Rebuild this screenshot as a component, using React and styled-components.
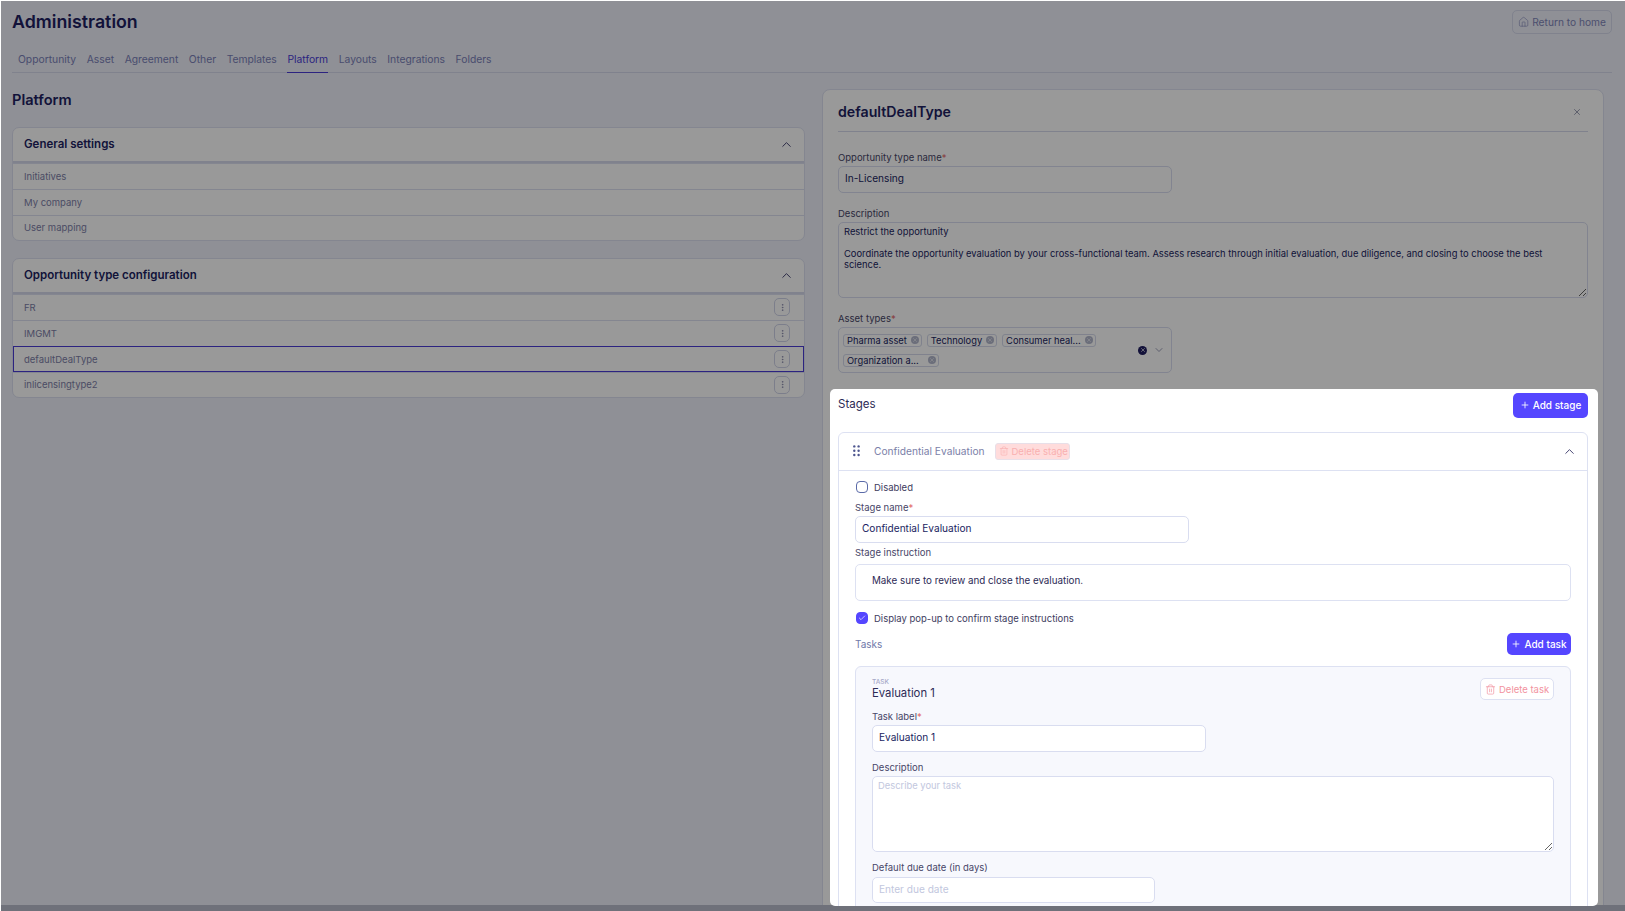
import React from 'react';
import styled, { createGlobalStyle } from 'styled-components';
import { House, Plus, X, ChevronUp, ChevronDown, Trash2, Check, EllipsisVertical } from 'lucide-react';

const GlobalStyle = createGlobalStyle`
  * { box-sizing: border-box; }
  html, body { margin: 0; height: 100%; overflow: hidden; }
  body {
    background: #eef0fa;
    font-family: Inter, "Noto Sans", sans-serif;
    color: #211e61;
  }
  input, textarea { font-family: inherit; }
`;

const Page = styled.div`
  position: relative;
  height: 911px;
  padding: 9px 13px 0 11px;
  border-top: 1px solid #fff;
  border-left: 1px solid #fff;
  overflow: hidden;
`;

const TopBar = styled.header`
  display: flex;
  justify-content: space-between;
  align-items: flex-start;
  height: 34px;
`;

const Title = styled.h1`
  margin: 0;
  font-size: 17.8px;
  line-height: 23px;
  font-weight: 600;
  color: #211e61;
`;

const HomeButton = styled.button`
  display: flex;
  align-items: center;
  gap: 3px;
  width: 100px;
  height: 24px;
  padding: 0 5px 1px;
  border: 1px solid #d5d9ec;
  border-radius: 5px;
  background: transparent;
  font: inherit;
  font-size: 10.2px;
  color: #7f85b8;
  white-space: nowrap;
`;

const Tabs = styled.nav`
  display: flex;
  gap: 10.6px;
  height: 29px;
  padding-left: 6px;
  border-bottom: 1px solid #d5d9ec;
`;

const Tab = styled.a`
  height: 29px;
  padding-top: 8px;
  font-size: 10.3px;
  line-height: 14px;
  color: ${({ $active }) => ($active ? '#4a3bd6' : '#7a80b8')};
  border-bottom: 1px solid ${({ $active }) => ($active ? '#4a3bd6' : 'transparent')};
`;

const Columns = styled.div`
  display: grid;
  grid-template-columns: 793px 782px;
  gap: 17px;
  padding-top: 17px;
`;

const LeftColumn = styled.section``;

const SectionTitle = styled.h2`
  margin: 0 0 17px;
  height: 20px;
  font-size: 14.6px;
  line-height: 20px;
  font-weight: 600;
  color: #211e61;
`;

const Card = styled.div`
  background: #fff;
  border: 1px solid #dde0f0;
  border-radius: 7px;
  overflow: hidden;
  margin-bottom: 17px;
`;

const CardHeader = styled.div`
  display: flex;
  align-items: center;
  justify-content: space-between;
  height: 35px;
  padding: 0 10px 1px 11px;
  font-size: 11.5px;
  font-weight: 600;
  color: #211e61;
  border-bottom: 2px solid #d5d9ec;
  svg { color: #3b3a6a; }
`;

const Row = styled.div`
  display: flex;
  align-items: center;
  justify-content: space-between;
  height: 26px;
  padding: 0 14px 0 11px;
  font-size: 9.5px;
  color: #7d80a8;
  border-top: 1px solid ${({ $selected }) => ($selected ? '#4a3bd6' : '#dde0f0')};
  border-bottom: 1px solid ${({ $selected }) => ($selected ? '#4a3bd6' : 'transparent')};
  outline: ${({ $selected }) => ($selected ? '1px solid #4a3bd6' : 'none')};
  outline-offset: -1px;
  &:first-of-type { border-top: 0; }
  &:last-child { height: 25px; }
`;

const DotsButton = styled.span`
  display: flex;
  align-items: center;
  justify-content: center;
  width: 16px;
  height: 18px;
  border: 1px solid #cfd3e8;
  border-radius: 5px;
  color: #6e7199;
`;

const Panel = styled.section`
  height: 830px;
  margin-top: -1px;
  padding: 0 15px;
  background: #fff;
  border: 1px solid #dde0f0;
  border-radius: 8px 8px 0 0;
`;

const PanelHead = styled.div`
  display: flex;
  align-items: center;
  justify-content: space-between;
  height: 42px;
  padding: 2px 6px 0 0;
  border-bottom: 1px solid #d5d9ec;
  font-size: 14.2px;
  font-weight: 600;
  color: #211e61;
  svg { color: #5f6385; }
`;

const Label = styled.label`
  display: block;
  font-size: 9.5px;
  line-height: 12px;
  color: #474668;
  b { color: #e26a6a; font-weight: 400; }
`;

const TextInput = styled.input`
  display: block;
  width: ${({ $w }) => $w || 334}px;
  height: ${({ $h }) => $h || 27}px;
  padding: 0 6px 3px;
  margin-top: ${({ $mt }) => $mt || 2}px;
  background: #fff;
  border: 1px solid #d9ddf0;
  border-radius: 5px;
  font-size: 10.1px;
  color: #211e61;
  outline: none;
  &::placeholder { color: #c2c7de; }
`;

const TextArea = styled.textarea`
  display: block;
  width: 100%;
  height: 76px;
  padding: 3px 5px;
  margin-top: 2px;
  background: #fff;
  border: 1px solid #d9ddf0;
  border-radius: 5px;
  font-size: 9.4px;
  line-height: 11px;
  color: #211e61;
  outline: none;
  resize: vertical;
  &::placeholder { color: #c2c7de; }
`;

const Field = styled.div`
  padding-top: ${({ $top }) => $top || 0}px;
`;

const MultiSelect = styled.div`
  display: flex;
  align-items: center;
  width: 334px;
  height: 46px;
  margin-top: 2px;
  padding: 0 6px 0 4px;
  border: 1px solid #d9ddf0;
  border-radius: 5px;
`;

const ChipWrap = styled.div`
  flex: 1;
  display: flex;
  flex-wrap: wrap;
  gap: 7px 5px;
`;

const Chip = styled.span`
  display: inline-flex;
  align-items: center;
  justify-content: space-between;
  gap: ${({ $gap }) => $gap || 4}px;
  height: 13px;
  padding: 0 2px 0 3px;
  border: 1px solid #d5d9ec;
  border-radius: 3px;
  font-size: 9.3px;
  color: #211e61;
  white-space: nowrap;
`;

const ChipClear = styled.span`
  display: flex;
  align-items: center;
  justify-content: center;
  width: 8px;
  height: 8px;
  border-radius: 50%;
  background: #b3b7cc;
  color: #fff;
`;

const ClearAll = styled(ChipClear)`
  width: 9px;
  height: 9px;
  margin-right: 6px;
  background: #211e61;
`;

const BottomStrip = styled.div`
  position: absolute;
  left: 0;
  right: 0;
  bottom: 0;
  height: 6px;
  background: #b9bdcc;
  z-index: 1;
`;

/* spotlight of the guided tour: its big shadow dims everything else */
const Stages = styled.div`
  position: relative;
  z-index: 2;
  height: 517px;
  margin: 16px -10px 0 -8px;
  padding: 4px 10px 0 8px;
  background: #fff;
  border-radius: 5px;
  overflow: hidden;
  box-shadow: 0 0 0 2000px rgba(0, 0, 0, 0.4);
`;

const StagesHead = styled.div`
  display: flex;
  justify-content: space-between;
  align-items: flex-start;
  height: 39px;
  font-size: 11.5px;
  line-height: 22px;
  color: #2c2a55;
`;

const PrimaryButton = styled.button`
  display: flex;
  align-items: center;
  justify-content: center;
  gap: 3px;
  width: ${({ $w }) => $w}px;
  height: ${({ $h }) => $h}px;
  padding: 0 0 1px;
  border: 0;
  border-radius: 5px;
  background: #5546ff;
  color: #fff;
  font: inherit;
  font-size: 10px;
  font-weight: 500;
`;

const StageCard = styled.div`
  border: 1px solid #dde1f2;
  border-radius: 6px 6px 0 0;
  height: 600px;
`;

const StageHead = styled.div`
  display: flex;
  align-items: center;
  height: 38px;
  padding: 0 10px 1px 14px;
  border-bottom: 1px solid #dde1f2;
  font-size: 10.2px;
  color: #7b7fa8;
  svg { flex: none; }
`;

const GripIcon = styled.svg`
  margin-right: 14px;
  fill: #4e568f;
`;

const DeleteStage = styled.span`
  display: flex;
  align-items: center;
  gap: 3px;
  width: 75px;
  height: 17px;
  margin-left: 10px;
  margin-right: auto;
  padding-left: 3px;
  background: #ffdcdc;
  border: 1px solid #e8dfe8;
  border-radius: 3px;
  font-size: 9.5px;
  color: #f9b0b0;
  white-space: nowrap;
`;

const StageBody = styled.div`
  padding: 10px 16px 0;
`;

const CheckRow = styled.div`
  display: flex;
  align-items: center;
  gap: 6px;
  height: 12px;
  padding-left: 1px;
  margin-top: ${({ $mt }) => $mt || 0}px;
  font-size: 9.5px;
  color: #3d3c60;
`;

const CheckBox = styled.span`
  display: flex;
  align-items: center;
  justify-content: center;
  width: 12px;
  height: 12px;
  border-radius: 4px;
  border: 1px solid ${({ $on }) => ($on ? '#5546ff' : '#5a6aa8')};
  background: ${({ $on }) => ($on ? '#5546ff' : '#fff')};
  color: #fff;
`;

const Instruction = styled.div`
  height: 37px;
  margin-top: 5px;
  padding: 10px 16px 0;
  border: 1px solid #dde1f2;
  border-radius: 5px;
  font-size: 9.8px;
  line-height: 12px;
  color: #2c2a55;
`;

const TasksHead = styled.div`
  display: flex;
  justify-content: space-between;
  align-items: center;
  height: 22px;
  margin-top: 9px;
  font-size: 10px;
  color: #6f78a8;
`;

const TaskCard = styled.div`
  margin-top: 11px;
  padding: 11px 16px 0;
  background: #f7f8fd;
  border: 1px solid #dde1f2;
  border-radius: 6px;
  height: 300px;
`;

const TaskHead = styled.div`
  display: flex;
  justify-content: space-between;
  height: 33px;
`;

const TaskKicker = styled.div`
  font-size: 6.5px;
  line-height: 8px;
  font-weight: 500;
  color: #a6a9c8;
`;

const TaskName = styled.div`
  font-size: 11.3px;
  line-height: 14px;
  color: #2c2a55;
`;

const DeleteTask = styled.span`
  display: flex;
  align-items: center;
  gap: 3px;
  width: 74px;
  height: 22px;
  padding-left: 4px;
  background: #fff;
  border: 1px solid #dde1f2;
  border-radius: 5px;
  font-size: 9.5px;
  color: #f293a0;
  white-space: nowrap;
`;

const leftGeneral = ['Initiatives', 'My company', 'User mapping'];
const leftTypes = ['FR', 'IMGMT', 'defaultDealType', 'inlicensingtype2'];
const tabs = ['Opportunity', 'Asset', 'Agreement', 'Other', 'Templates', 'Platform', 'Layouts', 'Integrations', 'Folders'];
const chips = [
  { name: 'Pharma asset' },
  { name: 'Technology' },
  { name: 'Consumer heal...' },
  { name: 'Organization a...', gap: 9 },
];

export default function App() {
  return (
    <Page>
      <GlobalStyle />
      <TopBar>
        <Title>Administration</Title>
        <HomeButton><House size={12} strokeWidth={1.25} />Return to home</HomeButton>
      </TopBar>
      <Tabs>
        {tabs.map((t) => <Tab key={t} $active={t === 'Platform'}>{t}</Tab>)}
      </Tabs>
      <Columns>
        <LeftColumn>
          <SectionTitle>Platform</SectionTitle>
          <Card>
            <CardHeader>General settings<ChevronUp size={15} strokeWidth={1.5} /></CardHeader>
            {leftGeneral.map((r) => <Row key={r}>{r}</Row>)}
          </Card>
          <Card>
            <CardHeader>Opportunity type configuration<ChevronUp size={15} strokeWidth={1.5} /></CardHeader>
            {leftTypes.map((r) => (
              <Row key={r} $selected={r === 'defaultDealType'}>
                {r}
                <DotsButton><EllipsisVertical size={9} strokeWidth={1.5} /></DotsButton>
              </Row>
            ))}
          </Card>
        </LeftColumn>
        <Panel>
          <PanelHead>defaultDealType<X size={10} strokeWidth={1.5} /></PanelHead>
          <Field $top={20}>
            <Label>Opportunity type name<b>*</b></Label>
            <TextInput defaultValue="In-Licensing" />
          </Field>
          <Field $top={15}>
            <Label>Description</Label>
            <TextArea defaultValue={'Restrict the opportunity\n\nCoordinate the opportunity evaluation by your cross-functional team. Assess research through initial evaluation, due diligence, and closing to choose the best science.'} />
          </Field>
          <Field $top={15}>
            <Label>Asset types<b>*</b></Label>
            <MultiSelect>
              <ChipWrap>
                {chips.map((c) => (
                  <Chip key={c.name} $gap={c.gap}>{c.name}<ChipClear><X size={6} strokeWidth={2} /></ChipClear></Chip>
                ))}
              </ChipWrap>
              <ClearAll><X size={6} strokeWidth={2.5} /></ClearAll>
              <ChevronDown size={12} strokeWidth={1.5} color="#7c7fa0" />
            </MultiSelect>
          </Field>
          <Stages>
            <StagesHead>
              Stages
              <PrimaryButton $w={75} $h={25}><Plus size={10} />Add stage</PrimaryButton>
            </StagesHead>
            <StageCard>
              <StageHead>
                <GripIcon width="7" height="12" viewBox="0 0 7 12">
                  <circle cx="1.3" cy="1.4" r="1.2" /><circle cx="5.6" cy="1.4" r="1.2" />
                  <circle cx="1.3" cy="5.7" r="1.2" /><circle cx="5.6" cy="5.7" r="1.2" />
                  <circle cx="1.3" cy="10" r="1.2" /><circle cx="5.6" cy="10" r="1.2" />
                </GripIcon>
                Confidential Evaluation
                <DeleteStage><Trash2 size={10} strokeWidth={1.5} />Delete stage</DeleteStage>
                <ChevronUp size={15} strokeWidth={1.5} color="#3b3a6a" />
              </StageHead>
              <StageBody>
                <CheckRow><CheckBox />Disabled</CheckRow>
                <Field $top={9}>
                  <Label>Stage name<b>*</b></Label>
                  <TextInput defaultValue="Confidential Evaluation" />
                </Field>
                <Field $top={4}>
                  <Label>Stage instruction</Label>
                  <Instruction>Make sure to review and close the evaluation.</Instruction>
                </Field>
                <CheckRow $mt={11}>
                  <CheckBox $on><Check size={8} strokeWidth={2} /></CheckBox>
                  Display pop-up to confirm stage instructions
                </CheckRow>
                <TasksHead>
                  Tasks
                  <PrimaryButton $w={64} $h={22}><Plus size={10} />Add task</PrimaryButton>
                </TasksHead>
                <TaskCard>
                  <TaskHead>
                    <div>
                      <TaskKicker>TASK</TaskKicker>
                      <TaskName>Evaluation 1</TaskName>
                    </div>
                    <DeleteTask><Trash2 size={11} strokeWidth={1.5} />Delete task</DeleteTask>
                  </TaskHead>
                  <Label>Task label<b>*</b></Label>
                  <TextInput defaultValue="Evaluation 1" />
                  <Field $top={10}>
                    <Label>Description</Label>
                    <TextArea placeholder="Describe your task" />
                  </Field>
                  <Field $top={10}>
                    <Label>Default due date (in days)</Label>
                    <TextInput $w={283} $h={26} $mt={3} placeholder="Enter due date" />
                  </Field>
                </TaskCard>
              </StageBody>
            </StageCard>
          </Stages>
        </Panel>
      </Columns>
      <BottomStrip />
    </Page>
  );
}
